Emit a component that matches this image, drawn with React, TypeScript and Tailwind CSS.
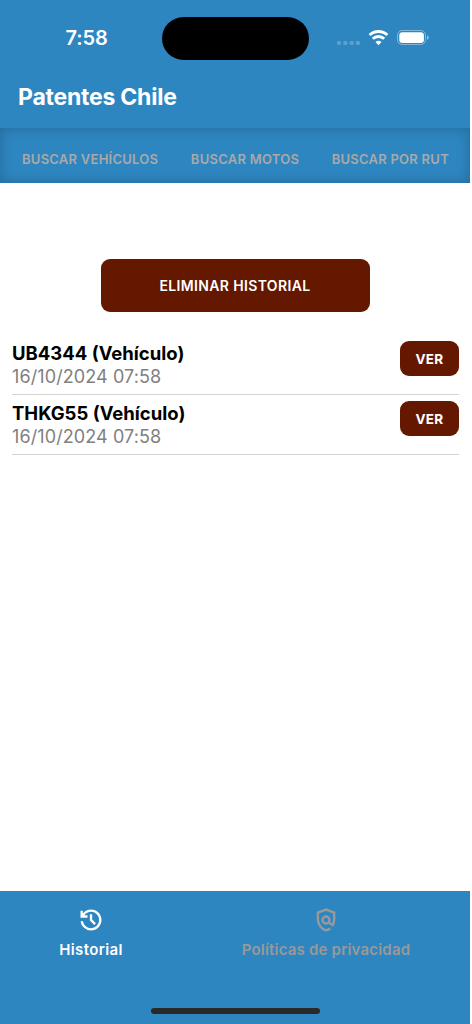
const tabs = ["BUSCAR VEHÍCULOS", "BUSCAR MOTOS", "BUSCAR POR RUT"];

const history = [
  { plate: "UB4344", type: "Vehículo", date: "16/10/2024 07:58" },
  { plate: "THKG55", type: "Vehículo", date: "16/10/2024 07:58" },
];

function StatusIcons() {
  return (
    <svg width="94" height="20" viewBox="0 0 94 20" className="ml-[28px]">
      <g fill="#fff" fillOpacity="0.22">
        <rect x="0" y="13" width="4" height="4" rx="1.2" />
        <rect x="6.3" y="13" width="4" height="4" rx="1.2" />
        <rect x="12.6" y="13" width="4" height="4" rx="1.2" />
        <rect x="18.9" y="13" width="4" height="4" rx="1.2" />
      </g>
      <g fill="none" stroke="#fff" strokeWidth="2.9">
        <path d="M32.6 7a13 13 0 0 1 17.8 0" />
        <path d="M35.8 10.8a8.4 8.4 0 0 1 11.4 0" />
      </g>
      <path d="M41.5 17.2l-3-3.1a4.4 4.4 0 0 1 6 0z" fill="#fff" />
      <rect x="60.5" y="2.5" width="28" height="14" rx="4.6" fill="none" stroke="#fff" strokeOpacity="0.4" />
      <rect x="62.3" y="4.3" width="24.6" height="10.6" rx="3" fill="#fff" />
      <path d="M90 7.6v4.2c1.1-.4 1.7-1.1 1.7-2.1s-.6-1.7-1.7-2.1z" fill="#fff" fillOpacity="0.5" />
    </svg>
  );
}

function HistoryIcon() {
  return (
    <svg width="28" height="28" viewBox="0 0 24 24" fill="currentColor">
      <path d="M12 21q-3.45 0-6.012-2.287T3.05 13H5.1q.35 2.6 2.313 4.3T12 19q2.925 0 4.963-2.037T19 12t-2.037-4.962T12 5q-1.725 0-3.225.8T6.25 8H9v2H3V4h2v2.35q1.275-1.6 3.113-2.475T12 3q1.875 0 3.513.713t2.85 1.924 1.925 2.85T21 12t-.712 3.513-1.925 2.85-2.85 1.925T12 21m2.8-4.8L11 12.4V7h2v4.6l3.2 3.2z" />
    </svg>
  );
}

function PolicyIcon() {
  return (
    <svg width="28" height="28" viewBox="0 0 24 24" fill="none" stroke="currentColor" strokeWidth="2">
      <path d="M15.6 19.2Q14 20.5 12 20.95Q8.9 20 6.95 17.3T5 11.1V5.7l7-2.63 7 2.63v5.4q0 2.9-1.3 5.3L14.2 14.2" />
      <circle cx="12" cy="12" r="3" />
    </svg>
  );
}

export default function App() {
  return (
    <div className="flex h-[1024px] w-[470px] flex-col bg-white font-['Inter',sans-serif] text-white">
      <header className="h-[128px] bg-[#2e86c1]">
        <div className="flex h-[76px] items-center">
          <div className="w-[162px] pl-[11px] text-center text-[20px] font-semibold tracking-[-0.1px]">7:58</div>
          <div className="h-[43px] w-[147px] rounded-full bg-black" />
          <StatusIcons />
        </div>
        <h1 className="pl-[18px] text-[23px] leading-[42px] font-bold tracking-[-0.23px]">Patentes Chile</h1>
      </header>

      <nav className="flex h-[55px] items-center justify-between bg-[#2e86c1] pt-[9px] pr-[21px] pl-[22px] text-[13px] font-semibold tracking-[0.25px] text-[#a9a9a9] shadow-[inset_0_0_14px_rgba(0,0,0,0.22)]">
        {tabs.map((tab) => (
          <span key={tab}>{tab}</span>
        ))}
      </nav>

      <main className="flex flex-1 flex-col">
        <button className="mt-[76px] h-[53px] w-[269px] self-center rounded-[9px] bg-[#641800] text-[14px] font-semibold tracking-[0.35px]">
          ELIMINAR HISTORIAL
        </button>
        <ul className="mr-[11px] ml-3 mt-[23px]">
          {history.map((item) => (
            <li key={item.plate} className="flex h-[60px] justify-between border-b border-[#d3d3d3] pt-[6px]">
              <div className="text-[18px] leading-[24px]">
                <p className="text-[18.5px] font-bold text-black">
                  {item.plate} ({item.type})
                </p>
                <p className="tracking-[0.1px] text-[#808080]">{item.date}</p>
              </div>
              <button className="h-[35px] w-[59px] rounded-[9px] bg-[#641800] pt-px text-[13.5px] font-bold tracking-[0.35px]">VER</button>
            </li>
          ))}
        </ul>
      </main>

      <footer className="flex h-[133px] flex-col justify-between bg-[#2e86c1] text-[15px] font-semibold">
        <div className="flex pt-[15px]">
          <div className="flex w-[182px] flex-col items-center">
            <HistoryIcon />
            <span className="mt-[5px] tracking-[0.35px]">Historial</span>
          </div>
          <div className="flex flex-1 flex-col items-center text-[#999]">
            <PolicyIcon />
            <span className="mt-[5px] tracking-[0.2px]">Políticas de privacidad</span>
          </div>
        </div>
        <div className="mb-[10px] h-[6px] w-[169px] self-center rounded-full bg-[#292929]" />
      </footer>
    </div>
  );
}
